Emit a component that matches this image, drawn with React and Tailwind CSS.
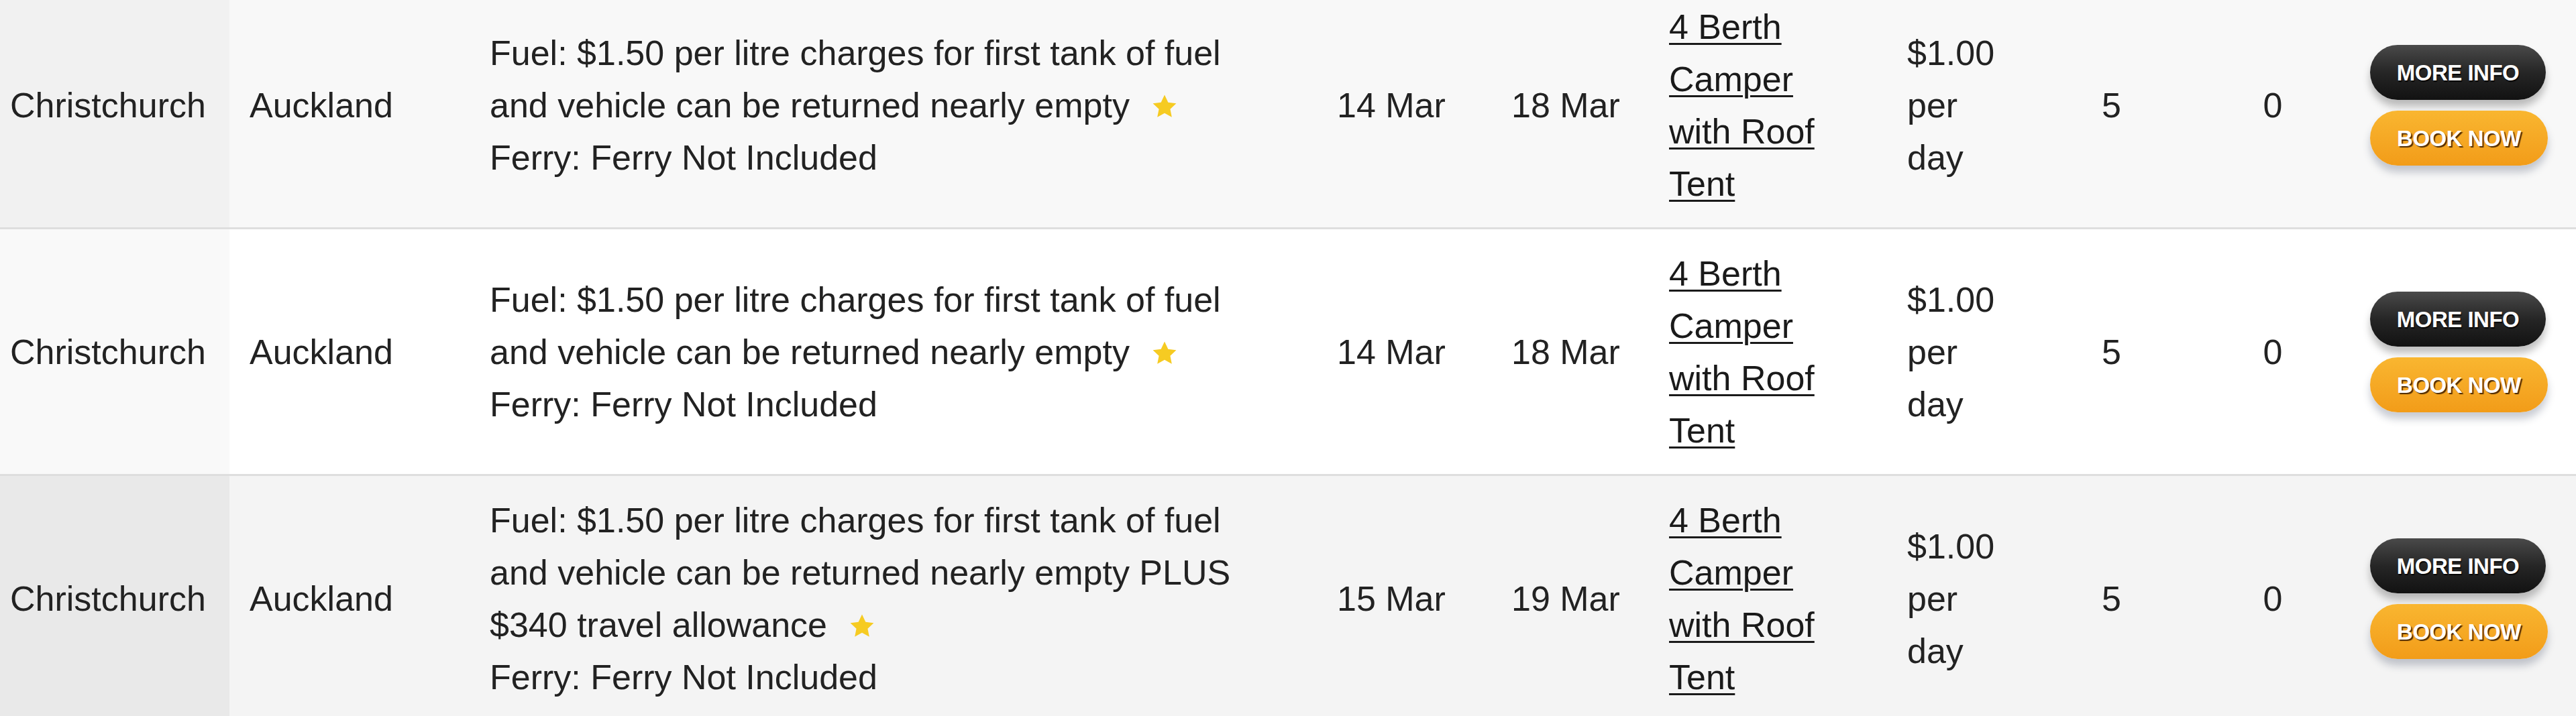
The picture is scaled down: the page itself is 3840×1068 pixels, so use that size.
const rows = [
  {
    from: 'Christchurch',
    to: 'Auckland',
    fuel: 'Fuel: $1.50 per litre charges for first tank of fuel and vehicle can be returned nearly empty',
    ferry: 'Ferry: Ferry Not Included',
    pickup: '14 Mar',
    dropoff: '18 Mar',
    vehicle: '4 Berth Camper with Roof Tent',
    price: '$1.00 per day',
    days: '5',
    extra: '0',
    first: 'bg-[#f1f1f1]',
    rest: 'bg-[#f8f8f8]',
  },
  {
    from: 'Christchurch',
    to: 'Auckland',
    fuel: 'Fuel: $1.50 per litre charges for first tank of fuel and vehicle can be returned nearly empty',
    ferry: 'Ferry: Ferry Not Included',
    pickup: '14 Mar',
    dropoff: '18 Mar',
    vehicle: '4 Berth Camper with Roof Tent',
    price: '$1.00 per day',
    days: '5',
    extra: '0',
    first: 'bg-[#f9f9f9]',
    rest: 'bg-white',
  },
  {
    from: 'Christchurch',
    to: 'Auckland',
    fuel: 'Fuel: $1.50 per litre charges for first tank of fuel and vehicle can be returned nearly empty PLUS $340 travel allowance',
    ferry: 'Ferry: Ferry Not Included',
    pickup: '15 Mar',
    dropoff: '19 Mar',
    vehicle: '4 Berth Camper with Roof Tent',
    price: '$1.00 per day',
    days: '5',
    extra: '0',
    first: 'bg-[#e9e9e9]',
    rest: 'bg-[#f4f4f4]',
  },
];

function Star() {
  return (
    <svg viewBox="0 0 24 24" className="inline-block w-[44px] h-[44px] ml-[30px] align-[-6px]">
      <path
        d="M12 2.5l2.9 6.1 6.6.8-4.9 4.6 1.3 6.6L12 17.3l-5.9 3.3 1.3-6.6-4.9-4.6 6.6-.8z"
        fill="#f6cb22"
      />
    </svg>
  );
}

function Buttons() {
  return (
    <div className="flex flex-col gap-[16px] w-[264px] ml-[2px]">
      <button className="h-[82px] w-[262px] rounded-full bg-gradient-to-b from-[#4a4a4a] via-[#262626] to-[#121212] text-white font-bold text-[33px] leading-none tracking-[-0.5px] [text-shadow:1px_2px_1px_rgba(0,0,0,0.8)] shadow-[0_10px_12px_rgba(0,0,0,0.25)]">
        MORE INFO
      </button>
      <button className="h-[82px] w-[265px] rounded-full bg-gradient-to-b from-[#f9b630] to-[#f29c18] text-white font-bold text-[33px] leading-none tracking-[-0.5px] [text-shadow:2px_2px_1px_rgba(60,30,0,0.9)] shadow-[0_10px_12px_rgba(40,50,80,0.25)]">
        BOOK NOW
      </button>
    </div>
  );
}

export default function App() {
  const cell = 'pt-[27px] pb-[26px] border-b-[3px] border-[#dedede] align-middle';

  return (
    <div className="h-[1068px] w-[3840px] overflow-hidden bg-white font-['Liberation_Sans',Arial,sans-serif] text-[52px] leading-[78px] text-[#222]">
      <table className="table-fixed border-collapse w-[3840px] mt-[-26px]">
        <colgroup>
          <col className="w-[342px]" />
          <col className="w-[358px]" />
          <col className="w-[1263px]" />
          <col className="w-[260px]" />
          <col className="w-[235px]" />
          <col className="w-[355px]" />
          <col className="w-[237px]" />
          <col className="w-[195px]" />
          <col className="w-[286px]" />
          <col className="w-[309px]" />
        </colgroup>
        <tbody>
          {rows.map((r, i) => (
            <tr key={i} className={r.rest}>
              <td className={`${cell} ${r.first} pl-[15px]`}>{r.from}</td>
              <td className={`${cell} pl-[30px]`}>{r.to}</td>
              <td className={`${cell} pl-[30px]`}>
                <div className="w-[1140px]">
                  {r.fuel}
                  <Star />
                </div>
                <div>{r.ferry}</div>
              </td>
              <td className={`${cell} pl-[30px]`}>{r.pickup}</td>
              <td className={`${cell} pl-[30px]`}>{r.dropoff}</td>
              <td className={`${cell} pl-[30px]`}>
                <div className="w-[250px]">
                  <a href="#" className="underline decoration-[3px] underline-offset-[6px] text-[#1a1a1a]">
                    {r.vehicle}
                  </a>
                </div>
              </td>
              <td className={`${cell} pl-[30px]`}>
                <div className="w-[140px]">{r.price}</div>
              </td>
              <td className={`${cell} text-center`}>{r.days}</td>
              <td className={`${cell} text-center`}>{r.extra}</td>
              <td className={cell}>
                <Buttons />
              </td>
            </tr>
          ))}
        </tbody>
      </table>
    </div>
  );
}
